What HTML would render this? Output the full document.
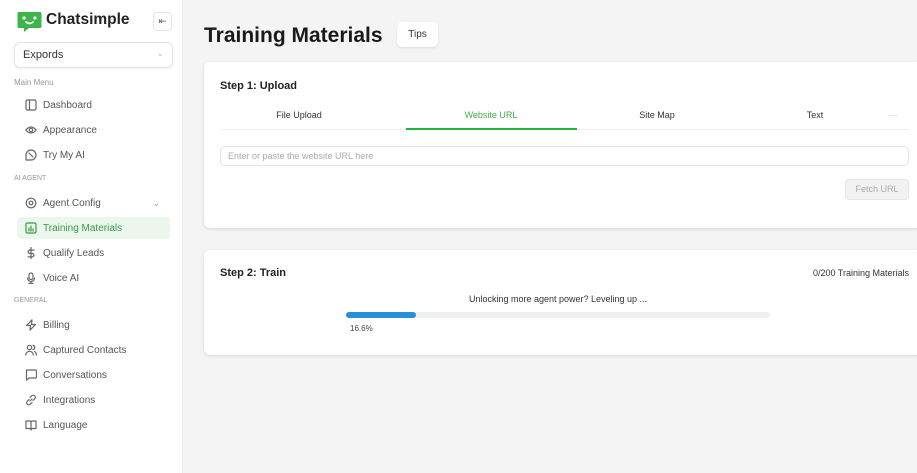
<!DOCTYPE html>
<html><head><meta charset="utf-8"><style>
*{box-sizing:border-box;margin:0;padding:0}
body{width:917px;height:473px;overflow:hidden;background:#f4f4f4;font-family:"Liberation Sans",sans-serif;position:relative;color:#222}
.sb{position:absolute;left:0;top:0;width:183px;height:473px;background:#fff;border-right:1px solid #ececec}
.abs{position:absolute}
.item{position:absolute;left:17px;width:153px;height:22px;font-size:10px;color:#555;display:flex;align-items:center;padding-left:8px}
.item svg{width:12px;height:12px;margin-right:6px;fill:none;stroke:#666;stroke-width:1.2;stroke-linecap:round;stroke-linejoin:round}
.lbl{position:absolute;left:14px;font-size:8px;color:#999}
.card{position:absolute;left:204px;width:720px;background:#fff;border-radius:6px;box-shadow:0 1px 3px rgba(0,0,0,.12)}
.tab{position:absolute;top:110px;font-size:9px;color:#333;transform:translateX(-50%)}
</style></head><body>
<div class="sb">
  <svg class="abs" style="left:17px;top:11px" width="25" height="21" viewBox="0 0 25 21"><path d="M2 1h21a1.5 1.5 0 0 1 1.5 1.5v13a1.5 1.5 0 0 1-1.5 1.5H12l-5 4v-4H2A1.5 1.5 0 0 1 .5 15.5v-13A1.5 1.5 0 0 1 2 1z" fill="#3db54a"/><circle cx="7" cy="7" r="1.6" fill="#fff"/><circle cx="18" cy="7" r="1.6" fill="#fff"/><path d="M9 11q3.5 3 7 0" stroke="#fff" stroke-width="1.8" fill="none" stroke-linecap="round"/></svg>
  <div class="abs" style="left:46px;top:11px;font-size:15.5px;font-weight:bold;color:#222">Chatsimple</div>
  <div class="abs" style="left:153px;top:12px;width:19px;height:19px;border:1px solid #e5e5e5;border-radius:4px;font-size:9px;color:#555;text-align:center;line-height:17px">⇤</div>
  <div class="abs" style="left:14px;top:42px;width:159px;height:26px;border:1px solid #e3e3e3;border-radius:6px;box-shadow:0 1px 2px rgba(0,0,0,.05);font-size:11px;padding:6px 8px;color:#333">Expords<span style="position:absolute;right:8px;top:5px;color:#bbb;font-size:9px">⌄</span></div>
  <div class="lbl" style="top:78px">Main Menu</div>
  <div class="item" style="top:94px"><svg viewBox="0 0 12 12"><rect x="1" y="1" width="10" height="10" rx="1.5"/><path d="M4.5 1v10"/></svg>Dashboard</div>
  <div class="item" style="top:119px"><svg viewBox="0 0 12 12"><path d="M.8 6Q6 0 11.2 6 6 12 .8 6z"/><circle cx="6" cy="6" r="1.7"/></svg>Appearance</div>
  <div class="item" style="top:144px"><svg viewBox="0 0 12 12"><path d="M1 11V6a5 5 0 0 1 10 0 5 5 0 0 1-5 5z"/><path d="M4 4l4 4"/></svg>Try My AI</div>
  <div class="lbl" style="top:175px;font-size:7px">AI AGENT</div>
  <div class="item" style="top:192px"><svg viewBox="0 0 12 12"><circle cx="6" cy="6" r="4.8"/><circle cx="6" cy="6" r="1.8"/></svg>Agent Config<span style="position:absolute;right:10px;color:#999;font-size:9px">⌄</span></div>
  <div class="item" style="top:217px;background:#ebf7ec;border-radius:4px;color:#3a9a47"><svg viewBox="0 0 12 12" style="stroke:#3a9a47"><rect x="1" y="1" width="10" height="10" rx="1.5"/><path d="M4 9V6M6 9V4M8 9V7"/></svg>Training Materials</div>
  <div class="item" style="top:242px"><svg viewBox="0 0 12 12"><path d="M6 .5v11M9 3H4.8a1.7 1.7 0 0 0 0 3.4h2.4a1.7 1.7 0 0 1 0 3.4H3"/></svg>Qualify Leads</div>
  <div class="item" style="top:267px"><svg viewBox="0 0 12 12"><rect x="4" y="1" width="4" height="6.5" rx="2"/><path d="M2.5 6a3.5 3.5 0 0 0 7 0M6 9.5v2M4 11.5h4"/></svg>Voice AI</div>
  <div class="lbl" style="top:297px;font-size:7px">GENERAL</div>
  <div class="item" style="top:314px"><svg viewBox="0 0 12 12"><path d="M7 .8 1.5 6.5h4L5 11.2l5.5-5.7h-4z"/></svg>Billing</div>
  <div class="item" style="top:339px"><svg viewBox="0 0 12 12"><circle cx="4.5" cy="3.5" r="2.2"/><path d="M.8 11a3.7 3.7 0 0 1 7.4 0M8 1.3a2.2 2.2 0 0 1 0 4.3M9.5 7.5a3.7 3.7 0 0 1 1.8 3.5"/></svg>Captured Contacts</div>
  <div class="item" style="top:364px"><svg viewBox="0 0 12 12"><path d="M1.5 1h9a1 1 0 0 1 1 1v6a1 1 0 0 1-1 1H4l-2.5 2.2V2a1 1 0 0 1 1-1z"/></svg>Conversations</div>
  <div class="item" style="top:389px"><svg viewBox="0 0 12 12"><path d="M5 7l2-2M4 5.5 2.3 7.2a2.1 2.1 0 0 0 3 3L7 8.5M8 6.5l1.7-1.7a2.1 2.1 0 0 0-3-3L5 3.5"/></svg>Integrations</div>
  <div class="item" style="top:414px"><svg viewBox="0 0 12 12"><path d="M1 2h3.5A1.5 1.5 0 0 1 6 3.5V11a1.5 1.5 0 0 0-1.5-1.5H1zM11 2H7.5A1.5 1.5 0 0 0 6 3.5V11a1.5 1.5 0 0 1 1.5-1.5H11z"/></svg>Language</div>
</div>

<div class="abs" style="left:204px;top:24px;font-size:21px;font-weight:bold;color:#1a1a1a">Training Materials</div>
<div class="abs" style="left:397px;top:22px;width:41px;height:25px;background:#fff;border-radius:5px;box-shadow:0 1px 2px rgba(0,0,0,.1);font-size:10px;text-align:center;line-height:25px;color:#333">Tips</div>

<div class="card" style="top:62px;height:166px"></div>
<div class="abs" style="left:220px;top:80px;font-size:11px;font-weight:bold">Step 1: Upload</div>
<div class="tab" style="left:299px">File Upload</div>
<div class="tab" style="left:491px;color:#3fae4c">Website URL</div>
<div class="tab" style="left:657px">Site Map</div>
<div class="tab" style="left:815px">Text</div>
<div class="tab" style="left:893px;color:#aaa">···</div>
<div class="abs" style="left:220px;top:129px;width:689px;height:1px;background:#f0f0f0"></div>
<div class="abs" style="left:406px;top:128px;width:171px;height:2px;background:#22b33f"></div>
<div class="abs" style="left:220px;top:146px;width:689px;height:20px;border:1px solid #e4e4e4;border-radius:5px;font-size:9px;color:#aaa;padding:4px 7px">Enter or paste the website URL here</div>
<div class="abs" style="left:845px;top:179px;width:64px;height:21px;background:#f2f2f2;border:1px solid #e6e6e6;border-radius:4px;font-size:9px;color:#aaa;text-align:center;line-height:19px">Fetch URL</div>

<div class="card" style="top:250px;height:105px"></div>
<div class="abs" style="left:220px;top:267px;font-size:11px;font-weight:bold">Step 2: Train</div>
<div class="abs" style="right:8px;top:268px;font-size:9px;color:#333">0/200 Training Materials</div>
<div class="abs" style="left:346px;width:424px;top:294px;font-size:9px;color:#333;text-align:center">Unlocking more agent power? Leveling up ...</div>
<div class="abs" style="left:346px;top:312px;width:424px;height:6px;background:#eef0f2;border-radius:3px"></div>
<div class="abs" style="left:346px;top:312px;width:70px;height:6px;background:#2a8fda;border-radius:3px"></div>
<div class="abs" style="left:350px;top:324px;font-size:8px;color:#444">16.6%</div>
</body></html>
